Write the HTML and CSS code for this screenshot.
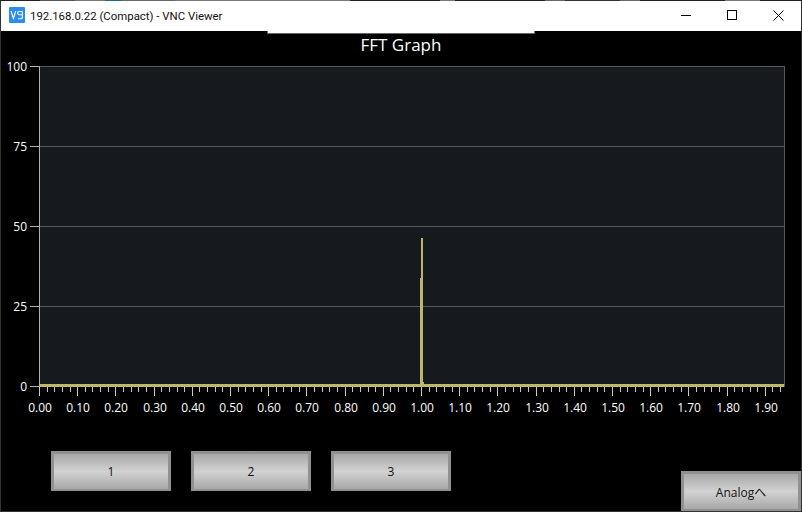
FILE: index.html
```html
<!DOCTYPE html>
<html lang="en">
<head>
<meta charset="utf-8">
<title>VNC Viewer</title>
<link rel="stylesheet" href="styles.css">
</head>
<body>
<div class="window">
  <div class="desktop-strip"></div>
  <header class="titlebar">
    <svg class="app-icon" width="16" height="16" viewBox="0 0 16 16">
      <rect width="16" height="16" rx="1" fill="#2a8cf0"/>
      <path d="M2 4l2.400 7.500L6.800 4M13.300 4.500H10.200a1.600 1.600 0 0 0 0 3.200h3.100V4.500M9 11.800h3a1.300 1.300 0 0 0 1.300-1.300V7.700" fill="none" stroke="#fff" stroke-width="1.100"/>
    </svg>
    <span class="window-title">192.168.0.22 (Compact) - VNC Viewer</span>
    <div class="window-controls">
      <span class="control"><svg width="10" height="10" viewBox="0 0 10 10"><path d="M0 5.500h10" stroke="#000"/></svg></span>
      <span class="control"><svg width="10" height="10" viewBox="0 0 10 10"><rect x=".5" y=".5" width="9" height="9" fill="none" stroke="#000"/></svg></span>
      <span class="control"><svg width="11" height="11" viewBox="0 0 11 11"><path d="M.5.500l10 10M10.500.500l-10 10" stroke="#000" fill="none"/></svg></span>
    </div>
  </header>
  <div class="vnc-tab"></div>
  <main class="screen">
    <h1 class="graph-title">FFT Graph</h1>
    <svg class="chart" id="chart" width="802" height="384" viewBox="0 0 802 384"></svg>
    <div class="buttons">
      <button class="btn">1</button>
      <button class="btn">2</button>
      <button class="btn">3</button>
      <button class="btn btn-analog">Analog<span class="hat">へ</span></button>
    </div>
  </main>
</div>
<script src="chart.js"></script>
</body>
</html>
```
FILE: styles.css
```css
* { box-sizing: border-box; }
html, body { margin: 0; padding: 0; background: #000; }
body { width: 802px; height: 512px; overflow: hidden; font-family: "Open Sans", "Noto Sans", sans-serif; }
.window { position: relative; width: 802px; height: 512px; display: flex; flex-direction: column; background: #000; border-left: 1px solid #333; border-right: 1px solid #333; border-bottom: 1px solid #333; }
.desktop-strip { flex: none; height: 1px; margin: 0 -1px; background: linear-gradient(90deg, #222 0 40px, #555 40px 75px, #777 75px 105px, #1a6a90 105px 122px, #666 122px 175px, #777 175px 350px, #222 350px 440px, #777 440px 455px, #222 455px 545px, #666 545px 565px, #333 565px 620px, #666 620px 640px, #222 640px 725px, #777 725px 760px, #222 760px 802px); }
.titlebar { flex: none; height: 30px; background: #fff; display: flex; align-items: center; padding-left: 8px; }
.app-icon { flex: none; margin: -2px 5px 0 0; }
.window-title { font-family: Roboto, "Open Sans", sans-serif; font-size: 11.4px; color: #111; white-space: nowrap; }
.window-controls { margin-left: auto; display: flex; }
.control { width: 46px; height: 30px; display: flex; align-items: center; justify-content: center; padding-bottom: 2px; }
.vnc-tab { position: absolute; left: 266px; top: 31px; width: 268px; height: 3px; background: #fff; border: 1px solid #666; border-top: 0; }
.screen { flex: 1; display: flex; flex-direction: column; min-height: 0; }
.graph-title { margin: 2px 0 0; height: 24px; font-size: 17px; line-height: 24px; font-weight: 400; color: #fff; text-align: center; }
.chart { display: block; flex: none; margin-left: -1px; }
.axis-text { font-family: "Open Sans", "Noto Sans", sans-serif; font-size: 12px; fill: #fff; }
.buttons { flex: none; display: flex; gap: 20px; padding: 0 0 0 50px; margin-top: 10px; }
.btn { width: 120px; height: 40px; border: 3px solid #919191; border-bottom-width: 2px; background: linear-gradient(#a8a8a8, #d2d2d2 50%, #a8a8a8); font-family: "Open Sans", "Noto Sans", sans-serif; font-size: 12px; color: #111; padding: 0; }
.btn-analog { margin-left: auto; margin-top: 20px; }
.hat { font-family: "Noto Sans CJK JP", sans-serif; }
```
FILE: chart.js
```js
const svg = document.getElementById('chart');
const NS = 'http://www.w3.org/2000/svg';
const TOP = 57; // the chart svg starts at y=57 in the page
function el(name, attrs, text) {
  const e = document.createElementNS(NS, name);
  for (const k in attrs) e.setAttribute(k, attrs[k]);
  if (text !== undefined) e.textContent = text;
  svg.appendChild(e);
  return e;
}
const y0 = 66 - TOP, y1 = 386 - TOP;
const x0 = 39.5, x1 = 784.5, pxPerTenth = 38.2;
el('rect', { x: x0, y: y0 + .5, width: x1 - x0, height: y1 - y0, fill: '#161a1e', stroke: '#55585b' });
[[100, 0], [75, 80], [50, 160], [25, 240], [0, 320]].forEach(([v, dy]) => {
  const y = y0 + dy + .5;
  if (v !== 100 && v !== 0) el('line', { x1: x0, x2: x1, y1: y, y2: y, stroke: '#55585b' });
  el('line', { x1: 30, x2: x0, y1: y, y2: y, stroke: '#b0b0b0' });
  el('text', { x: 27, y: y + 4, 'text-anchor': 'end', class: 'axis-text' }, v);
});
el('line', { x1: x0, x2: x0, y1: y0, y2: y1 + 10, stroke: '#b0b0b0' });
for (let i = 0; i <= 97; i++) {
  const x = Math.round(39 + i * pxPerTenth / 5) + .5;
  const major = i % 5 === 0;
  el('line', { x1: x, x2: x, y1: y1 + 1, y2: y1 + (major ? 10 : 6), stroke: '#c8c8c8' });
  if (major) el('text', { x: x + .5, y: y1 + 26, 'text-anchor': 'middle', class: 'axis-text' }, (i / 50).toFixed(2));
}
el('rect', { x: 40, y: y1 - 2, width: 744, height: 3, fill: '#bdb76b' });
el('rect', { x: 420, y: 278 - TOP, width: 1, height: 106, fill: '#bdb76b' });
el('rect', { x: 421, y: 238 - TOP, width: 2, height: 146, fill: '#bdb76b' });
el('rect', { x: 423, y: 382 - TOP, width: 1, height: 2, fill: '#bdb76b' });
```
